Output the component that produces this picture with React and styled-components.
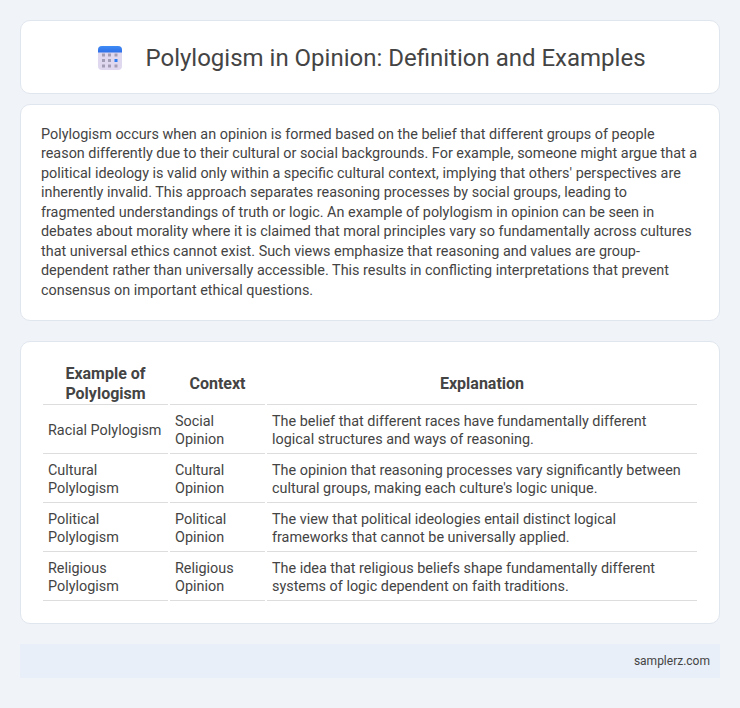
import styled, { createGlobalStyle } from "styled-components";

const GlobalStyle = createGlobalStyle`
  body {
    margin: 0;
    background: #f0f4f9;
    font-family: Roboto, "Liberation Sans", sans-serif;
    color: #444;
    font-size: 14.4px;
    line-height: 19.44px;
  }
`;

const Page = styled.div`
  width: 700px;
  margin: 0 auto;
  padding: 20px 0 30px;
`;

const Card = styled.div`
  background: #fff;
  border: 1px solid #e0e6ee;
  border-radius: 10px;
  padding: 20px;
  margin-bottom: ${(props) => props.$gap || "20px"};
`;

const Header = styled(Card)`
  display: flex;
  align-items: center;
  justify-content: center;
  gap: 23px;
  height: 74px;
  box-sizing: border-box;
  padding: 2px 20px 0 24px;
`;

const Title = styled.h1`
  margin: 0;
  font-size: 24px;
  font-weight: 400;
  line-height: 1.2;
  color: #444;
`;

const Text = styled.p`
  margin: 0;
`;

const Table = styled.table`
  width: 100%;
  table-layout: fixed;
  border-collapse: separate;
  border-spacing: 2px;
`;

const Th = styled.th`
  box-sizing: border-box;
  width: ${(props) => props.$width || "auto"};
  padding: 0 5px;
  font-size: 16px;
  font-weight: 700;
  line-height: 20px;
  text-align: center;
  border-bottom: 1px solid #ddd;
`;

const Td = styled.td`
  padding: 6px 5px 4px;
  font-size: 14.4px;
  line-height: 18px;
  border-bottom: 1px solid #ddd;
`;

const Footer = styled.div`
  background: #e8eff8;
  padding: 8px 10px;
  text-align: right;
  font-size: 12px;
  line-height: 18px;
  color: #444;
`;

const CalendarIcon = () => (
  <svg width="24" height="24" viewBox="0 0 24 24">
    <defs>
      <linearGradient id="top" x1="0" y1="0" x2="0" y2="1">
        <stop offset="0" stopColor="#3f8cf5" />
        <stop offset="1" stopColor="#2f6fe8" />
      </linearGradient>
    </defs>
    <rect x="0" y="0" width="24" height="24" rx="4" fill="#e0d8ee" />
    <path d="M0 6.5V4a4 4 0 0 1 4-4h16a4 4 0 0 1 4 4v2.5z" fill="url(#top)" />
    {[4, 10, 16.5].flatMap((x) =>
      [7.5, 13, 18.5].map((y) => (
        <rect
          key={x + "-" + y}
          x={x}
          y={y}
          width="3"
          height="3"
          fill={x === 16.5 && y === 13 ? "#2f7df0" : "#a39db5"}
        />
      ))
    )}
  </svg>
);

const rows = [
  ["Racial Polylogism", "Social Opinion", "The belief that different races have fundamentally different logical structures and ways of reasoning."],
  ["Cultural Polylogism", "Cultural Opinion", "The opinion that reasoning processes vary significantly between cultural groups, making each culture's logic unique."],
  ["Political Polylogism", "Political Opinion", "The view that political ideologies entail distinct logical frameworks that cannot be universally applied."],
  ["Religious Polylogism", "Religious Opinion", "The idea that religious beliefs shape fundamentally different systems of logic dependent on faith traditions."],
];

const App = () => (
  <Page>
    <GlobalStyle />
    <Header $gap="10px">
      <CalendarIcon />
      <Title>Polylogism in Opinion: Definition and Examples</Title>
    </Header>
    <Card>
      <Text>
        Polylogism occurs when an opinion is formed based on the belief that different groups of people reason differently due to their cultural or social backgrounds. For example, someone might argue that a political ideology is valid only within a specific cultural context, implying that others' perspectives are inherently invalid. This approach separates reasoning processes by social groups, leading to fragmented understandings of truth or logic. An example of polylogism in opinion can be seen in debates about morality where it is claimed that moral principles vary so fundamentally across cultures that universal ethics cannot exist. Such views emphasize that reasoning and values are group-dependent rather than universally accessible. This results in conflicting interpretations that prevent consensus on important ethical questions.
      </Text>
    </Card>
    <Card>
      <Table>
        <thead>
          <tr>
            <Th $width="125px">Example of Polylogism</Th>
            <Th $width="95px">Context</Th>
            <Th>Explanation</Th>
          </tr>
        </thead>
        <tbody>
          {rows.map((row) => (
            <tr key={row[0]}>
              {row.map((cell) => (
                <Td key={cell}>{cell}</Td>
              ))}
            </tr>
          ))}
        </tbody>
      </Table>
    </Card>
    <Footer>samplerz.com</Footer>
  </Page>
);

export default App;
